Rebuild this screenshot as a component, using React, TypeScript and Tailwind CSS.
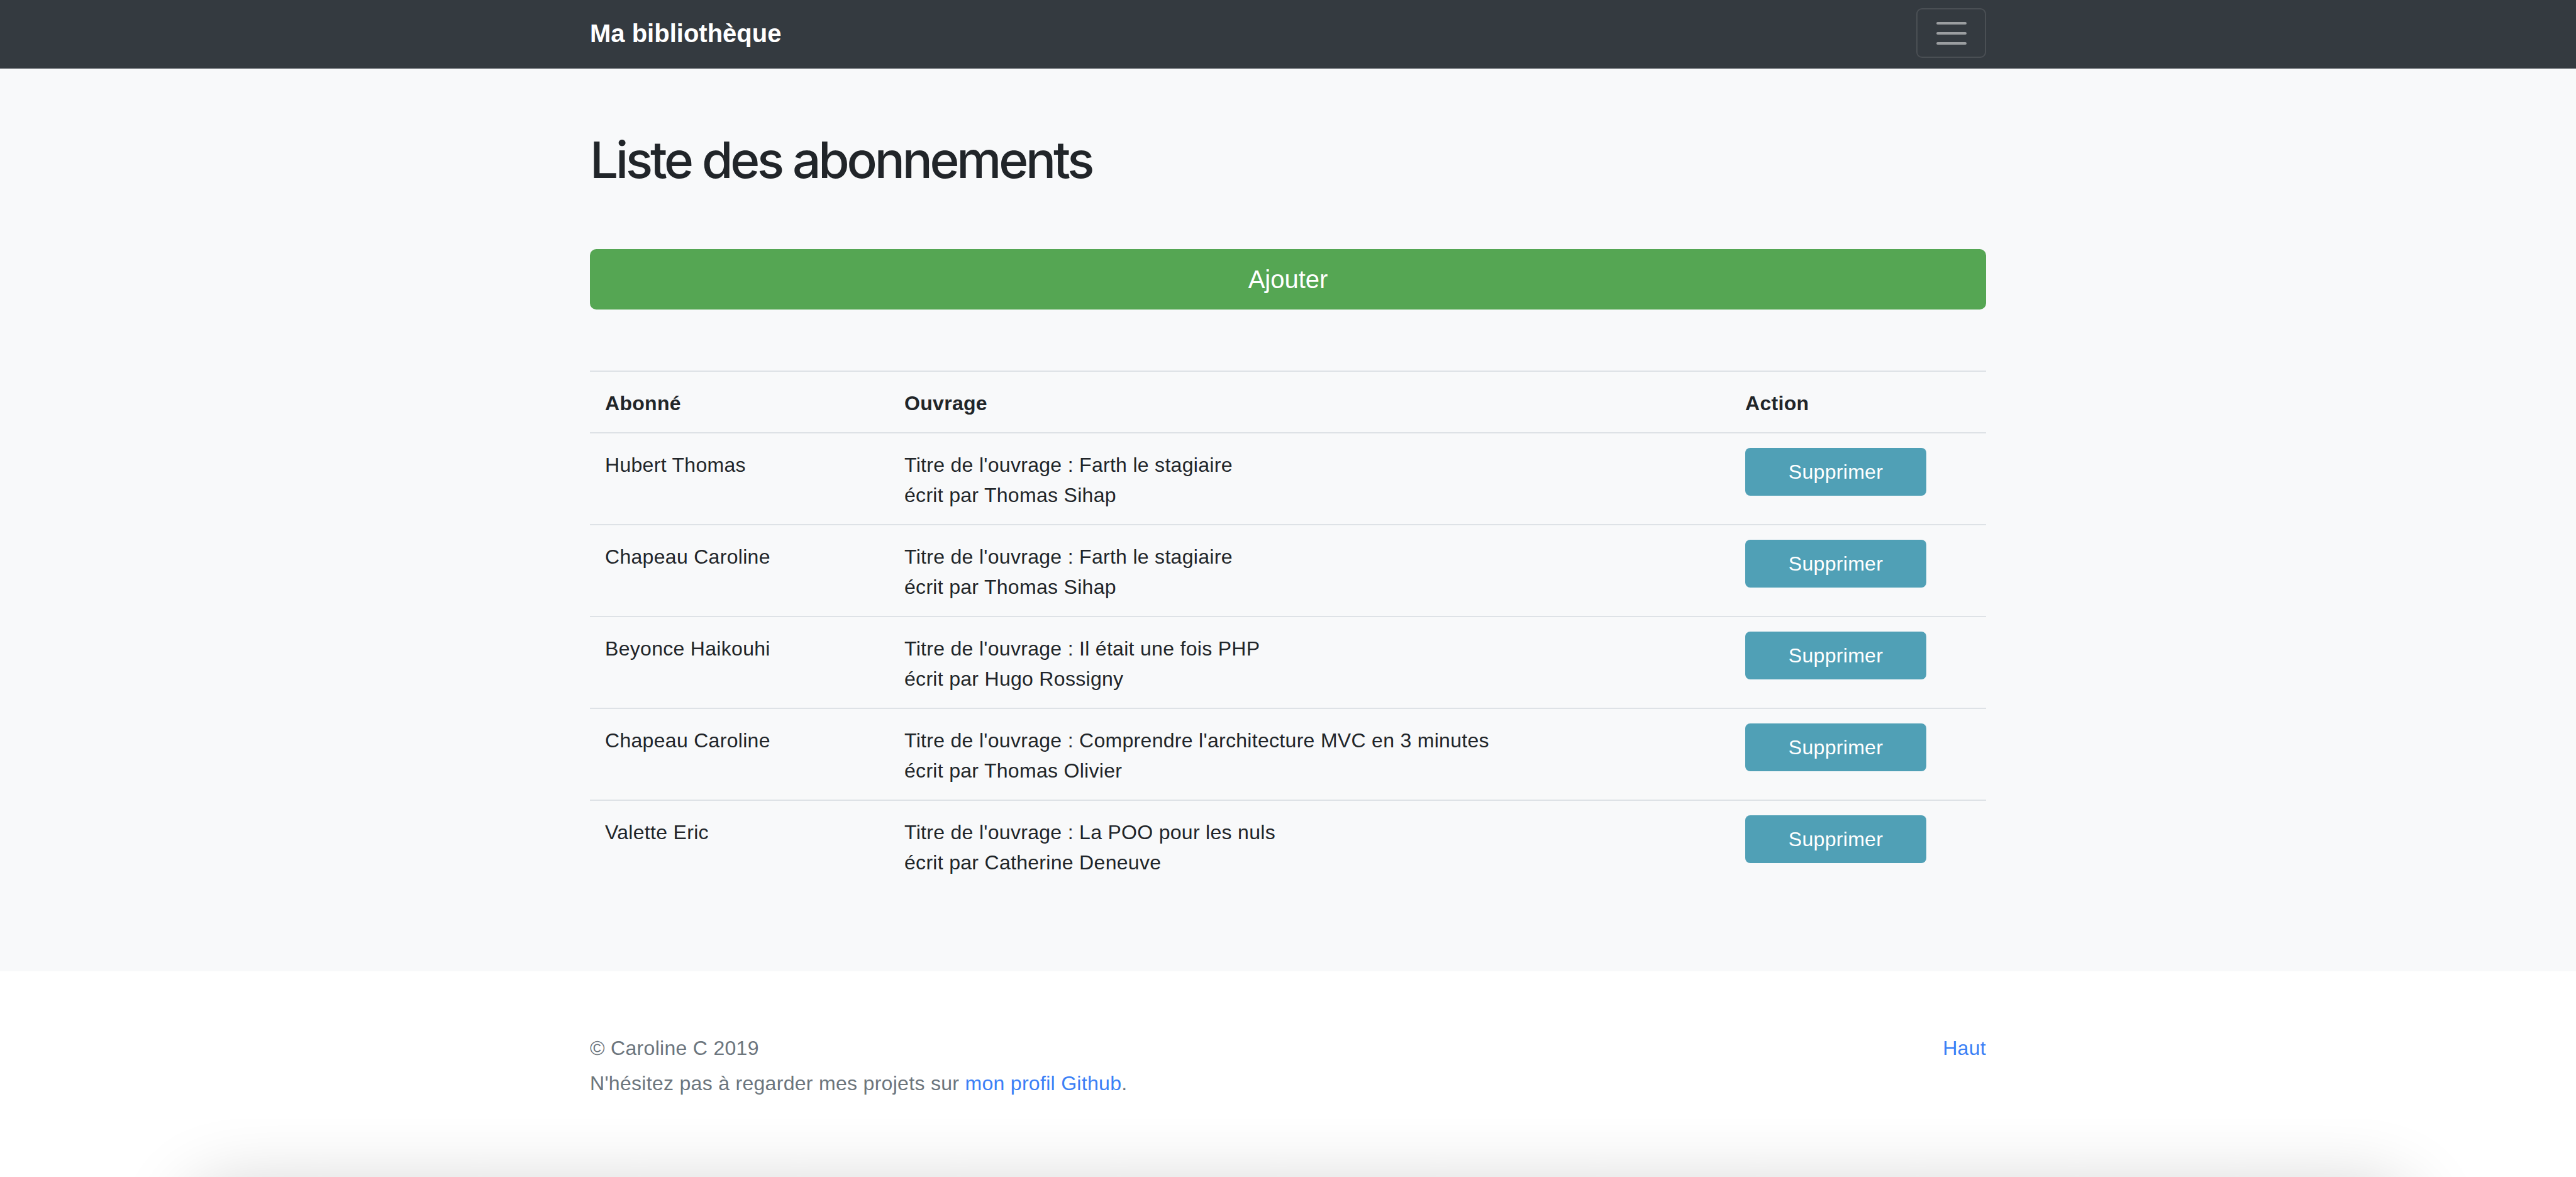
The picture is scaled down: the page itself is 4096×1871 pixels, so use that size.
const rows = [
  { name: "Hubert Thomas", title: "Farth le stagiaire", author: "Thomas Sihap" },
  { name: "Chapeau Caroline", title: "Farth le stagiaire", author: "Thomas Sihap" },
  { name: "Beyonce Haikouhi", title: "Il était une fois PHP", author: "Hugo Rossigny" },
  { name: "Chapeau Caroline", title: "Comprendre l'architecture MVC en 3 minutes", author: "Thomas Olivier" },
  { name: "Valette Eric", title: "La POO pour les nuls", author: "Catherine Deneuve" },
];

function Navbar() {
  return (
    <nav className="h-[109px] bg-[#343a40]">
      <div className="mx-auto flex w-[2220px] items-start justify-between pt-[13px]">
        <a href="#" className="mt-[10px] text-[40px] font-bold leading-[60px] tracking-normal text-white">
          Ma bibliothèque
        </a>
        <button className="flex h-[79px] w-[111px] items-center justify-center rounded-[9px] border-2 border-[#4a4f54]">
          <svg width="60" height="60" viewBox="0 0 30 30">
            <path d="M4 7h22M4 15h22M4 23h22" stroke="#9b9ea1" strokeWidth="2" strokeLinecap="round" />
          </svg>
        </button>
      </div>
    </nav>
  );
}

export default function App() {
  return (
    <div className="relative min-h-[1871px] overflow-hidden bg-white font-['Liberation_Sans',Arial,sans-serif] text-[32px] leading-[48px] tracking-[0.3px] text-[#212529]">
      <Navbar />

      <main className="bg-[#f8f9fa] pt-[97px] pb-[96px]">
        <div className="mx-auto w-[2220px]">
          <h1 className="font-['Inter',sans-serif] text-[80px] font-medium leading-[96px] tracking-[-4.2px]">
            Liste des abonnements
          </h1>

          <button className="mt-[94px] h-[96px] w-full rounded-[10px] bg-[#55a653] text-[40px] leading-[60px] tracking-normal text-white">
            Ajouter
          </button>

          <table className="mt-[97px] mb-[31px] w-full table-fixed border-collapse text-left">
            <colgroup>
              <col className="w-[476px]" />
              <col className="w-[1337px]" />
              <col className="w-[407px]" />
            </colgroup>
            <thead>
              <tr>
                <th className="border-t-2 border-[#dee2e6] px-[24px] pt-[26px] pb-[22px] font-bold">Abonné</th>
                <th className="border-t-2 border-[#dee2e6] px-[24px] pt-[26px] pb-[22px] font-bold">Ouvrage</th>
                <th className="border-t-2 border-[#dee2e6] px-[24px] pt-[26px] pb-[22px] font-bold">Action</th>
              </tr>
            </thead>
            <tbody>
              {rows.map((r, i) => (
                <tr key={i}>
                  <td className="border-t-2 border-[#dee2e6] px-[24px] pt-[26px] pb-[22px] align-top">{r.name}</td>
                  <td className="border-t-2 border-[#dee2e6] px-[24px] pt-[26px] pb-[22px] align-top">
                    Titre de l'ouvrage : {r.title}
                    <br />
                    écrit par {r.author}
                  </td>
                  <td className="border-t-2 border-[#dee2e6] px-[24px] pt-[23px] align-top">
                    <button className="h-[76px] w-[288px] rounded-[8px] bg-[#50a0b6] text-[32px] leading-[48px] text-white">
                      Supprimer
                    </button>
                  </td>
                </tr>
              ))}
            </tbody>
          </table>
        </div>
      </main>

      <footer className="bg-white pt-[98px] pb-[94px] text-[#6c757d]">
        <div className="mx-auto w-[2220px]">
          <p className="float-right mb-[8px]">
            <a href="#" className="text-[#3b80f6]">Haut</a>
          </p>
          <p className="mb-[8px]">© Caroline C 2019</p>
          <p className="mb-[8px]">
            N'hésitez pas à regarder mes projets sur{" "}
            <a href="#" className="text-[#3b80f6]">mon profil Github</a>.
          </p>
        </div>
      </footer>

      {/* shadow of the box sitting just under the fold */}
      <div className="absolute top-[1890px] left-[300px] right-[260px] h-[300px] rounded-[60px] bg-white shadow-[0_0_120px_rgba(0,0,0,0.2)]" />
    </div>
  );
}
